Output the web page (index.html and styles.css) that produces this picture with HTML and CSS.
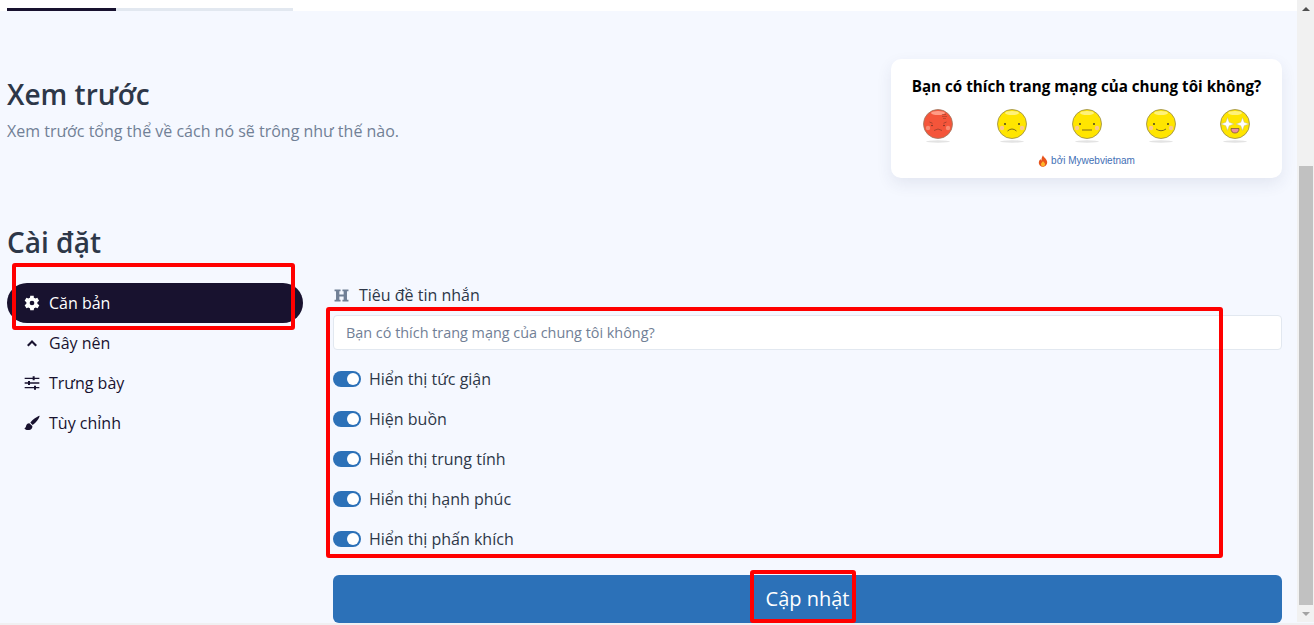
FILE: index.html
```html
<!DOCTYPE html>
<html lang="vi">
<head>
    <meta charset="UTF-8">
    <meta name="viewport" content="width=device-width, initial-scale=1.0">
    <title>Cài đặt</title>
    <link rel="stylesheet" href="styles.css">
</head>
<body>
    <div class="page">
        <div class="topbar">
            <div class="progress"><div class="progress-fill"></div></div>
        </div>

        <main class="content">
            <section class="preview">
                <div class="preview-text">
                    <h2>Xem trước</h2>
                    <p>Xem trước tổng thể về cách nó sẽ trông như thế nào.</p>
                </div>
                <div class="card">
                    <h3>Bạn có thích trang mạng của chung tôi không?</h3>
                    <div class="faces">
                        <svg class="face" viewBox="0 0 32 36">
                            <ellipse class="shadow" cx="16" cy="33.5" rx="12" ry="1.2"/>
                            <circle cx="16" cy="16" r="14.5" fill="#f4553a" stroke="#9a7a62" stroke-width=".8"/>
                            <ellipse cx="16" cy="5" rx="7" ry="2" fill="#ff9c86"/>
                            <circle cx="6" cy="20" r="2.2" fill="#f98a72"/>
                            <circle cx="26" cy="20" r="2.2" fill="#f98a72"/>
                            <path class="line angry" d="M7.500 14l3 1.300M24.500 14l-3 1.300M12 22.500q4-3 8 0"/>
                            <circle cx="10" cy="17.5" r=".8" fill="#6e3325"/>
                            <circle cx="22" cy="17.5" r=".8" fill="#6e3325"/>
                            <path class="line angry thin" d="M20 6.500h4M20 8.500h5M21 10.500h3"/>
                        </svg>
                        <svg class="face" viewBox="0 0 32 36">
                            <ellipse class="shadow" cx="16" cy="33.5" rx="12" ry="1.2"/>
                            <circle cx="16" cy="16" r="14.5" fill="#ffe500" stroke="#96884a" stroke-width=".8"/>
                            <ellipse cx="16" cy="5" rx="7" ry="2" fill="#fff27a"/>
                            <circle cx="6" cy="20" r="2.2" fill="#fbc98a"/>
                            <circle cx="26" cy="20" r="2.2" fill="#fbc98a"/>
                            <circle cx="9" cy="16" r="1" fill="#4a4320"/>
                            <circle cx="23" cy="16" r="1" fill="#4a4320"/>
                            <path class="line" d="M11.500 23q4.500-4 9 0"/>
                        </svg>
                        <svg class="face" viewBox="0 0 32 36">
                            <ellipse class="shadow" cx="16" cy="33.5" rx="12" ry="1.2"/>
                            <circle cx="16" cy="16" r="14.5" fill="#ffe500" stroke="#96884a" stroke-width=".8"/>
                            <ellipse cx="16" cy="5" rx="7" ry="2" fill="#fff27a"/>
                            <circle cx="6" cy="20" r="2.2" fill="#fbc98a"/>
                            <circle cx="26" cy="20" r="2.2" fill="#fbc98a"/>
                            <circle cx="9" cy="16" r="1" fill="#4a4320"/>
                            <circle cx="23" cy="16" r="1" fill="#4a4320"/>
                            <path class="line" d="M11 22h10"/>
                        </svg>
                        <svg class="face" viewBox="0 0 32 36">
                            <ellipse class="shadow" cx="16" cy="33.5" rx="12" ry="1.2"/>
                            <circle cx="16" cy="16" r="14.5" fill="#ffe500" stroke="#96884a" stroke-width=".8"/>
                            <ellipse cx="16" cy="5" rx="7" ry="2" fill="#fff27a"/>
                            <circle cx="6" cy="20" r="2.2" fill="#fbc98a"/>
                            <circle cx="26" cy="20" r="2.2" fill="#fbc98a"/>
                            <circle cx="9" cy="16" r="1" fill="#4a4320"/>
                            <circle cx="23" cy="16" r="1" fill="#4a4320"/>
                            <path class="line" d="M11 21q5 3.500 10 0"/>
                        </svg>
                        <svg class="face" viewBox="0 0 32 36">
                            <ellipse class="shadow" cx="16" cy="33.5" rx="12" ry="1.2"/>
                            <circle cx="16" cy="16" r="14.5" fill="#ffe500" stroke="#96884a" stroke-width=".8"/>
                            <ellipse cx="16" cy="5" rx="7" ry="2" fill="#fff27a"/>
                            <path class="star" d="M8.500 9.500l1.700 4.800 4.800 1.700-4.800 1.700-1.700 4.800-1.700-4.800L2 16l4.800-1.700z"/>
                            <path class="star" d="M23.500 9.500l1.700 4.800 4.800 1.700-4.800 1.700-1.700 4.800-1.700-4.800L17 16l4.800-1.700z"/>
                            <path d="M12 20.500h8q0 4.500-4 4.500t-4-4.500z" fill="#ee8ea0" stroke="#6d4a30" stroke-width=".7"/>
                        </svg>
                    </div>
                    <div class="credit">
                        <svg class="flame" viewBox="0 0 12 14">
                            <path d="M6 0c.5 2.500 4.500 4 5 8 .3 3.300-2.200 6-5 6s-5.300-2.400-5-5.500c.2-2 1.300-3 2-4 .2 1 .6 1.600 1.200 1.800C4 4 4.800 2 6 0z" fill="#e8541c"/>
                            <path d="M6 7c.5 1.200 2.500 2.200 2.500 4 0 1.500-1.100 2.500-2.500 2.500S3.500 12.500 3.500 11C3.500 9.300 5.500 8.500 6 7z" fill="#fdb52b"/>
                        </svg>
                        <a href="#">bởi Mywebvietnam</a>
                    </div>
                </div>
            </section>

            <h2 class="settings-title">Cài đặt</h2>

            <section class="settings">
                <nav class="side">
                    <a class="side-item active" href="#">
                        <svg class="side-icon" viewBox="0 0 24 24"><path fill-rule="evenodd" d="M20 13.300c.1-.4.1-.9.100-1.300s0-.9-.1-1.300l2.600-2-2.600-4.500-3.100 1.200c-.7-.5-1.400-.9-2.200-1.200L14.600 1H9.400l-.5 3.200c-.8.300-1.500.7-2.200 1.200L3.600 4.200 1 8.700l2.600 2c-.1.400-.1.900-.1 1.300s0 .9.100 1.300l-2.600 2 2.600 4.500 3.100-1.200c.7.500 1.400.9 2.200 1.200l.5 3.200h5.200l.5-3.200c.8-.3 1.500-.7 2.200-1.200l3.100 1.200 2.600-4.500zM12 15.500a3.500 3.500 0 1 1 0-7 3.500 3.500 0 0 1 0 7z"/></svg>
                        Căn bản
                    </a>
                    <a class="side-item" href="#">
                        <svg class="side-icon" viewBox="0 0 24 24"><path d="M12 7.500l7.500 7.500-2.300 2.300-5.200-5.200-5.200 5.200L4.500 15z"/></svg>
                        Gây nên
                    </a>
                    <a class="side-item" href="#">
                        <svg class="side-icon" viewBox="0 0 24 24"><path d="M1 4h12V2h3v2h7v2h-7v2h-3V6H1zM1 11h5V9h3v2h14v2H9v2H6v-2H1zM1 18h14v-2h3v2h5v2h-5v2h-3v-2H1z"/></svg>
                        Trưng bày
                    </a>
                    <a class="side-item" href="#">
                        <svg class="side-icon" viewBox="0 0 24 24"><path d="M23.500 1c-4 1-10.500 5.500-14 10.500l3.500 3.500C18 11.500 23 5 23.500 1zM8 12.500c-3.500 0-4.500 2.500-5 4.500-.3 1.500-1 2.500-2.500 3 1.500 2.500 4.500 3 7.500 2.500 3.500-.6 5-3.500 4.500-6z"/></svg>
                        Tùy chỉnh
                    </a>
                </nav>

                <form class="form">
                    <label class="field-label" for="title">
                        <svg class="h-icon" viewBox="0 0 16 14"><path d="M.5.500h6.500v2H5.700v3.300h4.600V2.500H9v-2h6.500v2h-1.600v9h1.600v2H9v-2h1.300V8H5.700v3.500H7v2H.5v-2h1.600v-9H.5z"/></svg>
                        Tiêu đề tin nhắn
                    </label>
                    <input class="text-input" id="title" type="text" value="Bạn có thích trang mạng của chung tôi không?">
                    <div class="switches">
                        <div class="switch-row"><span class="switch"></span>Hiển thị tức giận</div>
                        <div class="switch-row"><span class="switch"></span>Hiện buồn</div>
                        <div class="switch-row"><span class="switch"></span>Hiển thị trung tính</div>
                        <div class="switch-row"><span class="switch"></span>Hiển thị hạnh phúc</div>
                        <div class="switch-row"><span class="switch"></span>Hiển thị phấn khích</div>
                    </div>
                    <button class="save" type="button">Cập nhật</button>
                </form>
            </section>
        </main>

        <div class="scrollbar">
            <div class="scroll-arrow up"></div>
            <div class="scroll-track"><div class="scroll-thumb"></div></div>
            <div class="scroll-arrow down"></div>
        </div>
    </div>

    <div class="mark mark-nav"></div>
    <div class="mark mark-form"></div>
    <div class="mark mark-save"></div>
</body>
</html>
```

FILE: styles.css
```css
* {
    box-sizing: border-box;
}

html, body {
    margin: 0;
    height: 100%;
    overflow: hidden;
}

body {
    font-family: "Open Sans", "Noto Sans", sans-serif;
    color: #2d3748;
    background: #f0f0f2;
}

.page {
    height: 623px;
    padding-right: 17px;
    background: #f5f8ff;
}

/* thanh tien trinh */
.topbar {
    height: 11px;
    padding: 8px 0 0 7px;
    background: #fff;
}

.progress {
    width: 286px;
    height: 3px;
    background: #e2e8f0;
}

.progress-fill {
    width: 109px;
    height: 3px;
    background: #18122f;
}

.content {
    padding: 48px 15px 0 7px;
}

.preview {
    display: flex;
    justify-content: space-between;
}

.preview-text {
    padding-top: 15px;
}

.preview-text h2,
.settings-title {
    margin: 0;
    font-size: 28px;
    line-height: 40px;
    font-weight: 600;
    color: #2d3748;
}

.preview-text p {
    margin: 1px 0 0;
    font-size: 16px;
    line-height: 32px;
    color: #718096;
}

.card {
    width: 391px;
    height: 119px;
    padding-top: 15px;
    background: #fff;
    border-radius: 10px;
    box-shadow: 0 6px 16px rgba(45, 55, 100, 0.09);
    text-align: center;
}

.card h3 {
    margin: 0;
    font-size: 15.2px;
    line-height: 24px;
    font-weight: 700;
    color: #000;
}

.faces {
    display: flex;
    justify-content: space-between;
    padding: 10px 31px 0 31px;
}

.face {
    width: 32px;
    height: 36px;
}

.shadow {
    fill: #e3e3e3;
}

.line {
    fill: none;
    stroke: #5d4a22;
    stroke-width: .8;
}

.line.angry {
    stroke: #8a3a28;
    stroke-width: .7;
}

.line.angry.thin {
    stroke-width: .5;
}

.star {
    fill: #fff;
    stroke: #b9b48a;
    stroke-width: .4;
}

.credit {
    display: flex;
    justify-content: center;
    align-items: center;
    gap: 3px;
    margin-top: 10px;
    font-size: 10px;
    line-height: 14px;
}

.credit a {
    color: #3f6fb5;
    text-decoration: none;
    font-family: "Liberation Sans", sans-serif;
}

.flame {
    width: 10px;
    height: 12px;
}

.settings-title {
    margin-top: 44px;
}

.settings {
    display: flex;
    gap: 30px;
    margin-top: 21px;
}

.side {
    flex: 0 0 296px;
}

.side-item {
    display: flex;
    align-items: center;
    gap: 9px;
    height: 40px;
    padding-left: 17px;
    border-radius: 20px;
    font-size: 16px;
    color: #18122f;
    text-decoration: none;
}

.side-item.active {
    background: #18122f;
    color: #fff;
}

.side-icon {
    width: 16px;
    height: 16px;
    fill: currentColor;
}

.form {
    flex: 1;
    min-width: 0;
}

.field-label {
    display: flex;
    align-items: center;
    gap: 10px;
    height: 24px;
    margin-bottom: 8px;
    padding-left: 1px;
    font-size: 16px;
    color: #2d3748;
}

.h-icon {
    width: 15px;
    height: 13px;
    fill: #718096;
}

.text-input {
    display: block;
    width: 100%;
    height: 35px;
    padding: 0 12px;
    border: 1px solid #e2e8f0;
    border-radius: 4px;
    background: #fff;
    font: 14.4px "Open Sans", sans-serif;
    color: #718096;
    outline: none;
}

.switches {
    padding-top: 9px;
}

.switch-row {
    display: flex;
    align-items: center;
    gap: 8px;
    height: 40px;
    font-size: 16px;
    color: #2d3748;
}

.switch {
    position: relative;
    width: 28px;
    height: 16px;
    border-radius: 8px;
    background: #2c71b8;
}

.switch::after {
    content: "";
    position: absolute;
    top: 2px;
    right: 2px;
    width: 12px;
    height: 12px;
    border-radius: 50%;
    background: #fff;
}

.save {
    display: block;
    width: 100%;
    height: 48px;
    margin-top: 16px;
    padding: 0 0 2px;
    border: 0;
    border-radius: 6px;
    background: #2c71b8;
    color: #fff;
    font: 20px "Open Sans", sans-serif;
}

/* thanh cuon */
.scrollbar {
    position: fixed;
    top: 0;
    right: 0;
    bottom: 3px;
    width: 17px;
    display: flex;
    flex-direction: column;
    background: #f1f1f1;
}

.scroll-arrow {
    height: 17px;
    display: flex;
    align-items: center;
    justify-content: center;
}

.scroll-arrow::after {
    content: "";
    border-left: 4px solid transparent;
    border-right: 4px solid transparent;
}

.scroll-arrow.up::after {
    border-bottom: 4px solid #505050;
}

.scroll-arrow.down::after {
    border-top: 4px solid #a3a3a3;
}

.scroll-track {
    flex: 1;
    display: flex;
    flex-direction: column;
    justify-content: flex-end;
    padding: 0 1px 0 2px;
}

.scroll-thumb {
    height: 439px;
    background: #c1c1c1;
}

/* khung do danh dau */
.mark {
    position: fixed;
    border: 4px solid #ff0000;
    border-radius: 3px;
    pointer-events: none;
}

.mark-nav {
    left: 12px;
    top: 263px;
    width: 283px;
    height: 67px;
}

.mark-form {
    left: 326px;
    top: 307px;
    width: 897px;
    height: 251px;
}

.mark-save {
    left: 750px;
    top: 570px;
    width: 106px;
    height: 53px;
}
```
